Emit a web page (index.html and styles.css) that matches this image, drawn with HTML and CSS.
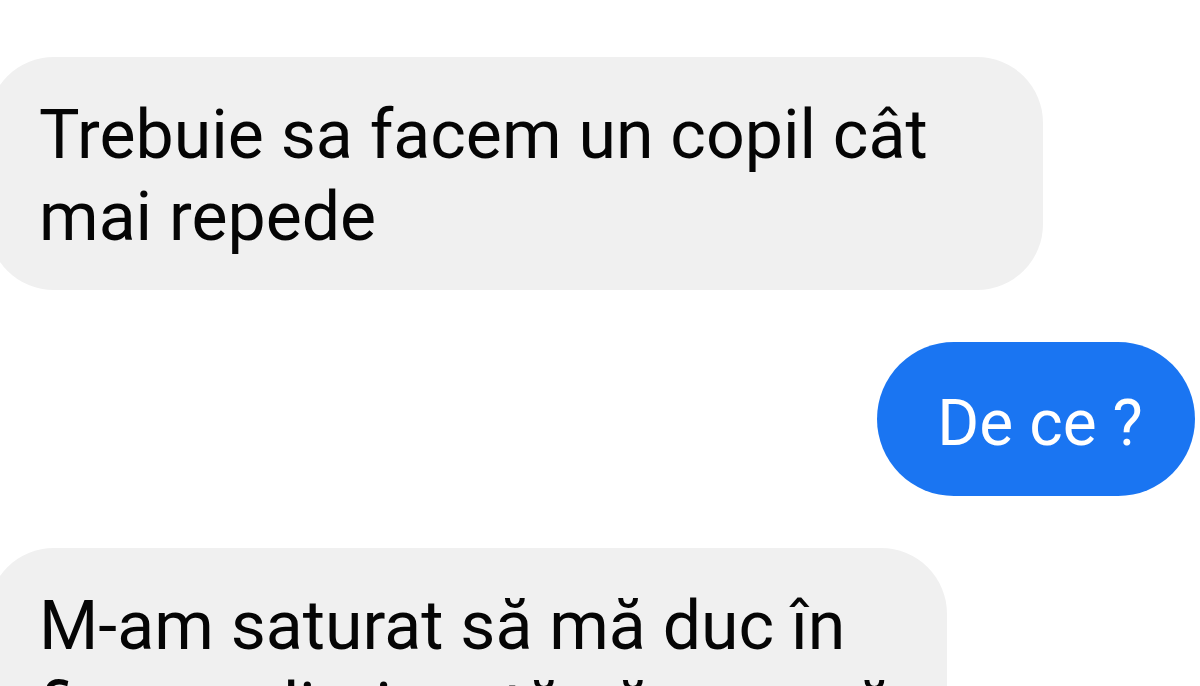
FILE: index.html
```html
<!DOCTYPE html>
<html lang="ro">
<head>
<meta charset="utf-8">
<link rel="stylesheet" href="styles.css">
</head>
<body>
<div class="chat">
  <div class="bubble in wide">Trebuie sa facem un copil cât mai repede</div>
  <div class="bubble out">De ce ?</div>
  <div class="bubble in mid">M-am saturat să mă duc în fiecare dimineață să car apă</div>
</div>
</body>
</html>
```
FILE: styles.css
```css
html, body {
  margin: 0;
  padding: 0;
  background: #ffffff;
  height: 686px;
  overflow: hidden;
}
.chat {
  display: flex;
  flex-direction: column;
  gap: 52px;
  padding-top: 57px;
  font-family: Roboto, "Noto Sans", sans-serif;
  font-size: 68px;
  line-height: 82px;
  color: #050505;
}
.bubble {
  box-sizing: border-box;
}
.in {
  align-self: flex-start;
  margin-left: -12px;
  background: #f0f0f0;
  border-radius: 66px;
  padding: 37px 40px 32px 51px;
}
.wide { width: 1055px; }
.mid { width: 959px; }
.out {
  align-self: flex-end;
  margin-right: 5px;
  width: 318px;
  height: 154px;
  background: #1a75f2;
  color: #ffffff;
  font-size: 64px;
  border-radius: 77px;
  display: flex;
  align-items: center;
  justify-content: center;
  padding: 10px 0 0 8px;
}
```
